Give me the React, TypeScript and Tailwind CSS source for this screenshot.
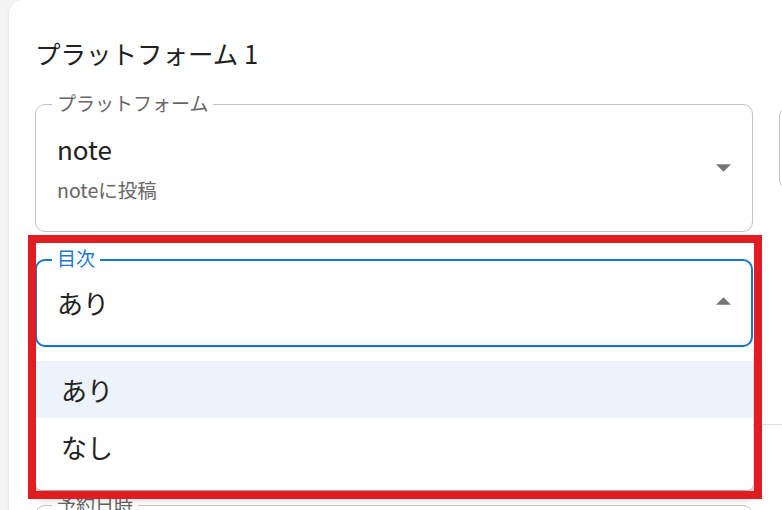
import React from "react";

const font = { fontFamily: '"Noto Sans CJK JP", "Noto Sans", sans-serif' };

function ArrowDown() {
  return (
    <svg width="15" height="8" viewBox="0 0 10 5" className="shrink-0">
      <path d="M0 0l5 5 5-5z" fill="#757575" />
    </svg>
  );
}

function ArrowUp() {
  return (
    <svg width="15" height="8" viewBox="0 0 10 5" className="shrink-0 mb-[4px]">
      <path d="M0 5l5-5 5 5z" fill="#757575" />
    </svg>
  );
}

export default function App() {
  return (
    <div
      className="relative w-[782px] h-[510px] overflow-hidden bg-[#f4f4f4]"
      style={font}
    >
      {/* Card */}
      <div className="ml-[9px] w-[820px] h-[560px] bg-white rounded-tl-[14px] shadow-[0_1px_3px_rgba(0,0,0,0.14)] pl-[26px] pt-[38px]">
        <div className="text-[25.5px] leading-[30px] text-[#212121]">
          プラットフォーム 1
        </div>

        <div className="flex gap-[26px] mt-[36px]">
          {/* Left column */}
          <div className="w-[718px] flex flex-col">
            {/* Field 1 */}
            <div className="relative h-[128px] border border-[#c4c4c4] rounded-[10px] flex items-center pl-[21px] pr-[21px]">
              <span className="absolute -top-[12px] left-[16px] px-[5px] bg-white text-[19px] leading-[20px] text-[#666666]">
                プラットフォーム
              </span>
              <div className="flex flex-col">
                <div className="text-[26px] leading-[34px] text-[#212121]">note</div>
                <div className="mt-[10px] text-[19.5px] leading-[28px] text-[#666666]">
                  noteに投稿
                </div>
              </div>
              <div className="ml-auto">
                <ArrowDown />
              </div>
            </div>

            {/* Field 2 (focused select) */}
            <div className="relative mt-[27px]">
              <div className="relative h-[88px] border-2 border-[#1976d2] rounded-[10px] flex items-center pl-[20px] pr-[20px]">
                <span className="absolute -top-[13px] left-[15px] px-[5px] bg-white text-[19px] leading-[20px] text-[#1976d2]">
                  目次
                </span>
                <div className="text-[26px] leading-[34px] text-[#212121]">あり</div>
                <div className="ml-auto flex items-center">
                  <ArrowUp />
                </div>
              </div>

              {/* Menu */}
              <div className="absolute z-10 left-[1px] right-0 top-[calc(100%+1px)] h-[142px] bg-white rounded-[6px] pt-[13px] shadow-[0_5px_5px_-3px_rgba(0,0,0,0.2),0_8px_10px_1px_rgba(0,0,0,0.14),0_3px_14px_2px_rgba(0,0,0,0.12)]">
                <div className="h-[57px] flex items-center pl-[25px] bg-[#edf3fb] text-[26px] leading-[34px] text-[#212121]">
                  あり
                </div>
                <div className="h-[57px] flex items-center pl-[25px] text-[26px] leading-[34px] text-[#212121]">
                  なし
                </div>
              </div>
            </div>
          </div>

          {/* Right column */}
          <div className="flex-1">
            <div className="mt-[4px] h-[80px] border border-[#c4c4c4] rounded-[8px]" />
          </div>
        </div>

        {/* Divider */}
        <div className="mt-[77px] border-t border-[#e0e0e0]" />

        {/* Field 3 */}
        <div className="mt-[80px] w-[718px] relative h-[88px] border border-[#c4c4c4] rounded-[10px]">
          <span className="absolute -top-[12px] left-[16px] px-[5px] bg-white text-[19px] leading-[20px] text-[#666666]">
            予約日時
          </span>
        </div>
      </div>

      {/* Red annotation frame */}
      <div className="absolute left-[28px] top-[235px] w-[734px] h-[264px] border-[8px] border-[#e21d22] pointer-events-none z-20" />
    </div>
  );
}
